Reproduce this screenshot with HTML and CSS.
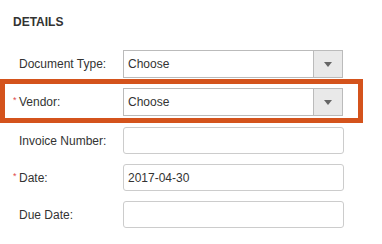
FILE: index.html
```html
<!DOCTYPE html>
<html lang="en">
<head>
  <meta charset="UTF-8">
  <title>Details</title>
  <link rel="stylesheet" href="styles.css">
</head>
<body>
  <!-- Details section -->
  <div class="details">
    <h2 class="section-title">DETAILS</h2>
    <div class="form-rows">
      <div class="form-row">
        <label for="doctype">Document Type:</label>
        <div class="select-box">
          <select id="doctype"><option>Choose</option></select>
          <span class="select-btn"><span class="caret"></span></span>
        </div>
      </div>
      <div class="form-row highlight">
        <label for="vendor"><span class="req">*</span>Vendor:</label>
        <div class="select-box">
          <select id="vendor"><option>Choose</option></select>
          <span class="select-btn"><span class="caret"></span></span>
        </div>
      </div>
      <div class="form-row">
        <label for="invoice">Invoice Number:</label>
        <input type="text" id="invoice">
      </div>
      <div class="form-row">
        <label for="date"><span class="req">*</span>Date:</label>
        <input type="text" id="date" value="2017-04-30">
      </div>
      <div class="form-row">
        <label for="due">Due Date:</label>
        <input type="text" id="due">
      </div>
    </div>
  </div>
</body>
</html>
```

FILE: styles.css
```css
* {
  margin: 0;
  padding: 0;
  box-sizing: border-box;
}
body {
  font-family: 'Liberation Sans', Arial, sans-serif;
  background: #fff;
  color: #333;
}
.details {
  width: 363px;
}
.section-title {
  font-size: 12px;
  line-height: 14px;
  font-weight: bold;
  color: #333;
  padding: 15px 13px 0;
  margin-bottom: 21px;
}
.form-rows {
  display: flex;
  flex-direction: column;
  gap: 10px;
}
.form-row {
  display: grid;
  grid-template-columns: 110px 220px;
  align-items: center;
  padding-left: 13px;
}
/* highlighted row */
.form-row.highlight {
  border: 5px solid #d4531c;
  padding: 4px 15px 2px 8px;
  margin: -9px 0 -6px;
}
.form-row label {
  font-size: 12px;
  color: #333;
  padding-left: 6px;
}
.req {
  color: #e0474c;
  font-size: 9px;
  display: inline-block;
  width: 6px;
  margin-left: -6px;
  vertical-align: 3px;
}
.form-row input {
  height: 27px;
  width: 221px;
  border: 1px solid #ccc;
  border-radius: 3px;
  padding: 0 4px;
  font-family: inherit;
  font-size: 12px;
  color: #333;
}
.select-box {
  display: flex;
  height: 28px;
  width: 220px;
  border: 1px solid #bbb;
}
.select-box select {
  flex: 1;
  appearance: none;
  -webkit-appearance: none;
  border: none;
  background: #fff;
  padding: 0 4px;
  font-family: inherit;
  font-size: 12px;
  color: #333;
}
.select-btn {
  width: 29px;
  background: #e9e9e9;
  border-left: 1px solid #bbb;
  display: flex;
  align-items: center;
  justify-content: center;
}
.caret {
  width: 0;
  height: 0;
  border-left: 4px solid transparent;
  border-right: 4px solid transparent;
  border-top: 5px solid #666;
}
```
